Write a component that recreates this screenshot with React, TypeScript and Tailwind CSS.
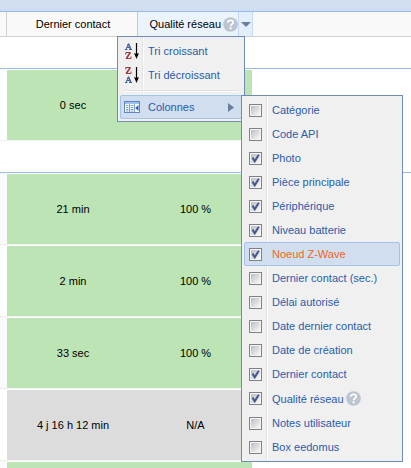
import React, { useState } from 'react';

interface Device {
  id: number;
  lastContact: string;
  quality: string;
  stale?: boolean;
}

interface Column {
  id: string;
  label: string;
  visible: boolean;
  help?: boolean;
}

const groups: Device[][] = [
  [{ id: 1, lastContact: '0 sec', quality: '' }],
  [
    { id: 2, lastContact: '21 min', quality: '100 %' },
    { id: 3, lastContact: '2 min', quality: '100 %' },
    { id: 4, lastContact: '33 sec', quality: '100 %' },
    { id: 5, lastContact: '4 j 16 h 12 min', quality: 'N/A', stale: true },
    { id: 6, lastContact: '', quality: '' },
  ],
];

const initialColumns: Column[] = [
  { id: 'category', label: 'Catégorie', visible: false },
  { id: 'api', label: 'Code API', visible: false },
  { id: 'photo', label: 'Photo', visible: true },
  { id: 'room', label: 'Pièce principale', visible: true },
  { id: 'device', label: 'Périphérique', visible: true },
  { id: 'battery', label: 'Niveau batterie', visible: true },
  { id: 'zwave', label: 'Noeud Z-Wave', visible: true },
  { id: 'contactSec', label: 'Dernier contact (sec.)', visible: false },
  { id: 'delay', label: 'Délai autorisé', visible: false },
  { id: 'contactDate', label: 'Date dernier contact', visible: false },
  { id: 'created', label: 'Date de création', visible: false },
  { id: 'contact', label: 'Dernier contact', visible: true },
  { id: 'quality', label: 'Qualité réseau', visible: true, help: true },
  { id: 'notes', label: 'Notes utilisateur', visible: false },
  { id: 'box', label: 'Box eedomus', visible: false },
];

const HelpIcon = () => (
  <svg width="15" height="15" viewBox="0 0 15 15" className="shrink-0">
    <circle cx="7.5" cy="7.5" r="7.3" fill="#bcc4d0" />
    <path d="M4.800 5.800C4.800 4.200 5.900 3.300 7.500 3.300S10.200 4.200 10.200 5.500C10.200 7.300 7.600 7.200 7.600 9.200" fill="none" stroke="#fff" strokeWidth="1.800" />
    <rect x="6.600" y="10.300" width="2" height="2" fill="#fff" />
  </svg>
);

const SortIcon = ({ descending = false }: { descending?: boolean }) => (
  <svg width="16" height="16" viewBox="0 0 16 16" className="shrink-0">
    <g transform={descending ? 'translate(1 9)' : 'translate(1 0)'} fill="none" stroke="#3f5c9e">
      <path d="M1 6.500L3.300 .8" />
      <path d="M3.300 .6L5.800 6.500" strokeWidth="1.600" />
      <path d="M2 4.500H5M0 6.500H2.400M4 6.500H7" />
    </g>
    <g transform={descending ? 'translate(1 -9)' : 'translate(1 0)'} fill="none" stroke="#9b3a41">
      <path d="M.8 11.500V9.500H5.500M1 15.500H6V13.500" />
      <path d="M5.300 9.500L1.300 15.500" strokeWidth="1.600" />
    </g>
    <path d="M12.500 0V11" stroke="#000" strokeWidth="1.200" />
    <path d="M10 10L12.500 16L15 10L12.500 11Z" fill="#000" />
  </svg>
);

const ColumnsIcon = () => (
  <svg width="16" height="16" viewBox="0 0 16 16" className="shrink-0">
    <rect x=".5" y="2.500" width="15" height="11" fill="#fff" stroke="#5f88bd" />
    <path d="M1 3h14v2H1z" fill="#9fc0ea" />
    <path d="M5.500 5V13M10.500 5V13" stroke="#7fa3d3" />
    <path d="M2 6.500h2.500M2 8.500h2.500M2 10.500h2.500M2 12h2.500M6.500 6.500h3M6.500 8.500h3M6.500 10.500h3M6.500 12h3" stroke="#7ea6d8" />
    <path d="M14.500 6v6L11.200 9z" fill="#2d5ec0" />
  </svg>
);

export default function App() {
  const [columns, setColumns] = useState(initialColumns);
  const [active, setActive] = useState('zwave');

  const toggle = (id: string) =>
    setColumns(columns.map((c) => (c.id === id ? { ...c, visible: !c.visible } : c)));

  return (
    <div className="relative h-screen overflow-hidden bg-white font-['Liberation_Sans',Arial,sans-serif] text-[11px] leading-4 text-black">
      {/* Panel toolbar */}
      <div className="h-3 border-b border-[#99bbe8] bg-[#d0def0]" />

      <table className="w-full table-fixed border-separate border-spacing-0">
        <colgroup>
          <col className="w-[7px]" />
          <col className="w-[130px]" />
          <col className="w-[115px]" />
          <col />
        </colgroup>
        <thead>
          <tr className="h-[25px] bg-[#f9f9f9]">
            <th className="border-r border-b border-[#d0d0d0] p-0" />
            <th className="border-b border-[#d0d0d0] p-0 pl-[2px] text-center font-normal">Dernier contact</th>
            <th className="border-b border-l border-b-[#d0d0d0] border-l-[#aaccf6] bg-[#ebf3fd] p-0 font-normal">
              <div className="flex h-6 items-center justify-end">
                <span className="mr-[2px]">Qualité réseau</span>
                <HelpIcon />
                <button aria-label="Options de colonne" className="flex h-6 w-[14px] items-center justify-center border-l border-[#c3daf9] bg-[#e2eefc]">
                  <svg width="10" height="5" viewBox="0 0 10 5">
                    <path d="M0 0h10L5 5z" fill="#6b7f9c" />
                  </svg>
                </button>
              </div>
            </th>
            <th className="border-b border-l border-b-[#d0d0d0] border-l-[#c3daf9] p-0" />
          </tr>
        </thead>
        {groups.map((devices, g) => (
          <tbody key={g}>
            <tr className="h-8">
              <td colSpan={4} className="border-b border-[#99bbe8] p-0" />
            </tr>
            {devices.map((d, i) => {
              const fill = d.stale ? 'bg-[#dcdcdc]' : 'bg-[#bce4b5]';
              return (
                <tr key={d.id} className="h-[72px] text-center">
                  <td className={`border-b border-[#ededed] p-0 ${g > 0 && i % 2 === 0 ? 'bg-[#fafafa]' : ''}`} />
                  <td className={`border-y border-t-white border-b-[#f4f4f4] p-0 pl-[2px] ${fill}`}>{d.lastContact}</td>
                  <td className={`border-y border-t-white border-b-[#f4f4f4] p-0 pl-[2px] ${fill}`}>{d.quality}</td>
                  <td className="p-0" />
                </tr>
              );
            })}
          </tbody>
        ))}
      </table>

      {/* Header menu */}
      <div className="absolute top-9 left-[117px] w-32 border border-[#718bb7] bg-[#f0f0f0] p-[2px] text-[#2a5cab]">
        <div className="pointer-events-none absolute inset-y-0 left-6 w-[2px] border-r border-l border-r-white border-l-[#e2e3e3]" />
        <div className="relative">
          <button className="flex h-6 w-full items-center gap-2 px-1">
            <SortIcon />
            <span>Tri croissant</span>
          </button>
          <button className="flex h-6 w-full items-center gap-2 px-1">
            <SortIcon descending />
            <span>Tri décroissant</span>
          </button>
          <div className="flex h-2 items-center px-1">
            <div className="h-[2px] w-full border-t border-b border-t-[#e0e0e0] border-b-white" />
          </div>
          <button className="flex h-6 w-full items-center gap-2 rounded-[2px] border border-[#a3c3ef] bg-[#d0def0] px-[3px]">
            <ColumnsIcon />
            <span>Colonnes</span>
            <svg width="6" height="9" viewBox="0 0 6 9" className="mr-1 ml-auto">
              <path d="M0 0v9L6 4.500z" fill="#6b7f9c" />
            </svg>
          </button>
        </div>
      </div>

      {/* Column chooser */}
      <div className="absolute top-[95px] left-[241px] w-[162px] border border-[#718bb7] bg-[#f0f0f0] p-[2px] text-[#2a5cab]">
        <div className="pointer-events-none absolute inset-y-0 left-6 w-[2px] border-r border-l border-r-white border-l-[#e2e3e3]" />
        <div className="relative">
          {columns.map((c) => (
            <label
              key={c.id}
              onMouseEnter={() => setActive(c.id)}
              className={`flex items-center rounded-[2px] border px-1 ${c.help ? 'h-[25px]' : 'h-6'} ${
                active === c.id ? 'border-[#a3c3ef] bg-[#d0def0] text-[#f26522]' : 'border-transparent'
              }`}
            >
              <span className="mr-[10px] grid shrink-0">
                <input
                  type="checkbox"
                  checked={c.visible}
                  onChange={() => toggle(c.id)}
                  className="peer col-start-1 row-start-1 size-[13px] appearance-none border border-[#808285] bg-linear-to-br from-[#b4b8bf] to-white shadow-[inset_0_0_0_1px_#f4f4f4]"
                />
                <svg
                  width="13"
                  height="13"
                  viewBox="0 0 13 13"
                  className="pointer-events-none invisible col-start-1 row-start-1 peer-checked:visible"
                >
                  <path d="M3.500 5.500L5.700 9.300L9.800 2.800" fill="none" stroke="#44568f" strokeWidth="2" />
                </svg>
              </span>
              <span>{c.label}</span>
              {c.help && (
                <span className="ml-[2px]">
                  <HelpIcon />
                </span>
              )}
            </label>
          ))}
        </div>
      </div>
    </div>
  );
}
